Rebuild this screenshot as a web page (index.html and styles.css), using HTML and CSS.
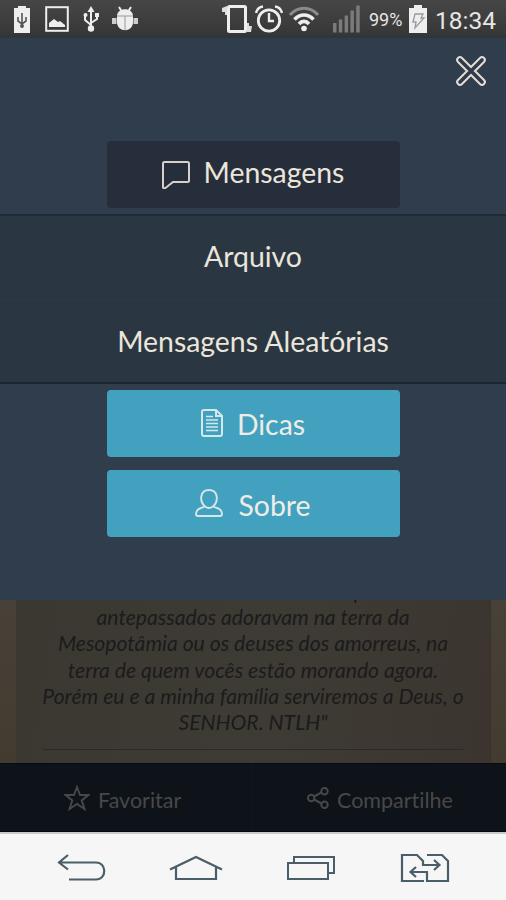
FILE: index.html
```
<!doctype html>
<html lang="pt-BR">
<head>
	<meta charset="UTF-8">
	<title>Mensagens</title>
	<link rel="stylesheet" href="styles.css">
</head>
<body>
<div class="screen">
	<div class="status">
		<div class="status-left">
			<svg width="18" height="28" viewBox="0 0 18 28"><path d="M5 1h8v2h4v25H1V3h4z" fill="#eee"/><path d="M9 8v14M5 12v4l4 3 4-3v-4" fill="none" stroke="#555" stroke-width="1.6"/><circle cx="9" cy="21" r="2" fill="#555"/></svg>
			<svg width="24" height="26" viewBox="0 0 24 26"><rect x="1.2" y="1.2" width="21.6" height="23.6" fill="none" stroke="#eee" stroke-width="2"/><path d="M4 21v-4l5-4 4 3 2-1 5 4v2z" fill="#eee"/></svg>
			<svg width="16" height="26" viewBox="0 0 16 26"><path d="M8 4v18M2 9v5l6 5M14 9v4l-6 4" fill="none" stroke="#eee" stroke-width="2"/><path d="M8 0l3.5 6h-7z" fill="#eee"/><circle cx="8" cy="22.500" r="3.200" fill="#eee"/><circle cx="2.500" cy="9" r="2" fill="#eee"/><path d="M12 7h4v4h-4z" fill="#eee"/></svg>
			<svg width="26" height="26" viewBox="0 0 26 26"><path d="M7 1l2.500 4M19 1l-2.500 4" stroke="#eee" stroke-width="2"/><path d="M5 10c0-9 16-9 16 0v6c0 11-16 11-16 0z" fill="#eee"/><path d="M0 12h4.500v6H0zM21.500 12H26v6h-4.500z" fill="#ccc"/><path d="M13 10v14M5 10h16" stroke="#999" stroke-width="1"/></svg>
		</div>
		<div class="status-right">
			<svg width="30" height="28" viewBox="0 0 30 28"><rect x="6.500" y="1.500" width="17" height="25" rx="1" fill="none" stroke="#eee" stroke-width="3"/><path d="M0 3l5-2v9H3V7H0zM25 18h2v3h3l-1 6h-4z" fill="#ddd"/></svg>
			<svg class="alarm" width="28" height="28" viewBox="0 0 28 28"><circle cx="14" cy="15.500" r="10.700" fill="none" stroke="#eee" stroke-width="2.800"/><path d="M14 8v8h5" fill="none" stroke="#eee" stroke-width="2.400"/><path d="M1 8c1-4 3-6 7-6.500M27 8c-1-4-3-6-7-6.500" fill="none" stroke="#eee" stroke-width="2.400"/></svg>
			<svg class="wifi" width="30" height="26" viewBox="0 0 30 26"><path d="M1 9c8-9 20-9 28 0" fill="none" stroke="#8a8a8a" stroke-width="3"/><path d="M5.500 13.500c5.500-6 13.500-6 19 0M10 18c3-3.500 7-3.500 10 0" fill="none" stroke="#eee" stroke-width="3.600"/><circle cx="15" cy="22.500" r="2.800" fill="#eee"/></svg>
			<svg class="signal" width="27" height="28" viewBox="0 0 27 28"><path d="M0 18h3.500v9.500H0zM5.800 14.500h3.500v13H5.800zM11.600 10.500h3.500v17h-3.500zM17.400 5.500h3.500v22h-3.500zM23.200 0.500h3.500v27h-3.500z" fill="#7b7b7b"/></svg>
			<span class="percent">99%</span>
			<svg class="battery" width="20" height="28" viewBox="0 0 20 28"><path d="M6 0h8v3h5v25H1V3h5z" fill="#eee"/><path d="M7 9h8l-2 4h3l-9 10 1-6H5z" fill="none" stroke="#999" stroke-width="1.300"/></svg>
			<span class="clock">18:34</span>
		</div>
	</div>

	<nav class="menu">
		<div class="menu-top">
			<svg width="32" height="32" viewBox="0 0 32 32"><path d="M5 5l22 22M27 5L5 27" stroke="#e4ddd5" stroke-width="7.600" stroke-linecap="round"/><path d="M5 5l22 22M27 5L5 27" stroke="#2d3b4b" stroke-width="3.600" stroke-linecap="round"/></svg>
		</div>
		<a class="button active">
			<svg width="28" height="28" viewBox="0 0 28 28"><path d="M2.500 1h23q1.500 0 1.500 1.500v17q0 1.500-1.500 1.500H11l-7.500 6q-2.500 1-2.500-1V2.500Q1 1 2.500 1z" fill="none" stroke="#d8d0c8" stroke-width="2"/></svg>
			<span>Mensagens</span>
		</a>
		<ul class="submenu">
			<li>Arquivo</li>
			<li>Mensagens Aleatórias</li>
		</ul>
		<a class="button tips">
			<svg width="22" height="28" viewBox="0 0 22 28"><path d="M3 1h12l6 6v18q0 2-2 2H3q-2 0-2-2V3q0-2 2-2zM15 1v6h6" fill="none" stroke="#d5e7e8" stroke-width="2"/><path d="M5 7.500h7M5 11h12M5 14.500h12M5 18h12M5 21.500h12" stroke="#d5e7e8" stroke-width="1.700"/></svg>
			<span>Dicas</span>
		</a>
		<a class="button about">
			<svg width="28" height="28" viewBox="0 0 28 28"><path d="M10 17.500C4 12 5 1 14 1s10 11 4 16.500c4 2 9 2 9 7.500q0 2-2 2H3q-2 0-2-2c0-5.500 5-5.500 9-7.500q4 3 8 0" fill="none" stroke="#d5e7e8" stroke-width="1.900" stroke-linejoin="round"/></svg>
			<span>Sobre</span>
		</a>
	</nav>

	<main class="page">
		<div class="card">
			<p class="verse">Resolvam se vão servir os deuses que os seus<br>
			antepassados adoravam na terra da<br>
			Mesopotâmia ou os deuses dos amorreus, na<br>
			terra de quem vocês estão morando agora.<br>
			Porém eu e a minha família serviremos a Deus, o<br>
			SENHOR. NTLH"</p>
			<hr>
		</div>
	</main>

	<div class="actions">
		<a class="favorite">
			<svg width="26" height="26" viewBox="0 0 26 26"><path d="M13 2l3 8h8.500l-6.800 5.400L20.500 24 13 19l-7.500 5 2.800-8.600L1.500 10H10z" fill="none" stroke="#484848" stroke-width="1.900"/></svg>
			<span>Favoritar</span>
		</a>
		<a class="share">
			<svg width="22" height="22" viewBox="0 0 22 22"><path d="M7 9.500l7.500-4M7 12.500l7.500 4" stroke="#484848" stroke-width="2"/><g fill="none" stroke="#484848" stroke-width="2"><circle cx="4.200" cy="11" r="3.200"/><circle cx="17.500" cy="4.200" r="3.200"/><circle cx="17.500" cy="17.800" r="3.200"/></g></svg>
			<span>Compartilhe</span>
		</a>
	</div>

	<div class="keys">
		<svg width="50" height="28" viewBox="0 0 50 28"><path d="M11 1L2 8.500l9 7M2 8.500h37c11 0 11 17 0 17H12" fill="none" stroke="#4a5e69" stroke-width="2.200"/></svg>
		<svg class="home" width="54" height="26" viewBox="0 0 54 26"><path d="M1 14.500L27 2l26 12.500M7 12v12h40V12" fill="none" stroke="#4a5e69" stroke-width="2.200"/></svg>
		<svg class="recent" width="48" height="24" viewBox="0 0 48 24"><path d="M1 7h40v16H1zM7 7V1h40v16h-6" fill="none" stroke="#4a5e69" stroke-width="2"/></svg>
		<svg class="switch" width="50" height="30" viewBox="0 0 50 30"><path d="M24 28H2V2h15l6 6v4h16M34 7l5.500 5-5.500 5M27 2h15l6 6v20H27V19H11M16 14l-5.500 5 5.500 5" fill="none" stroke="#4a5e69" stroke-width="2.200"/></svg>
	</div>
</div>
</body>
</html>
```
FILE: styles.css
```
*{
	margin:0;
	padding:0;
	box-sizing:border-box;
}

body{
	background:#000;
	overflow:hidden;
	font-family:Lato, sans-serif;
	font-variant-ligatures:none;
}

svg{
	display:block;
	flex-shrink:0;
}

.screen{
	width:506px;
	height:900px;
	display:flex;
	flex-direction:column;
	overflow:hidden;
}

/* status bar */
.status{
	height:38px;
	flex-shrink:0;
	display:flex;
	justify-content:space-between;
	padding:4px 10px 0 13px;
	background:linear-gradient(#464646, #393939 80%, #303438);
	color:#e6e6e6;
	font-family:Roboto, sans-serif;
}
.status-left{
	display:flex;
	align-items:center;
	height:29px;
	gap:14px;
}
.status-left svg:nth-child(4){
	margin-left:-1px;
}
.status-right{
	display:flex;
	align-items:center;
	height:29px;
}
.alarm{
	margin-left:3px;
}
.wifi{
	margin-left:6px;
}
.signal{
	margin-left:14px;
}
.percent{
	width:34px;
	margin-left:9px;
	padding-top:2px;
	font-size:18px;
	white-space:nowrap;
}
.battery{
	margin-left:5px;
}
.clock{
	width:61px;
	margin-left:7px;
	padding-top:3px;
	font-size:24.5px;
	white-space:nowrap;
}

/* menu */
.menu{
	height:562px;
	flex-shrink:0;
	background:#303d4c;
}
.menu-top{
	height:103px;
	display:flex;
	justify-content:flex-end;
	padding:17px 19px 0 0;
}
.button{
	display:flex;
	align-items:center;
	justify-content:center;
	width:293px;
	height:67px;
	margin:0 auto;
	border-radius:4px;
	background:#43a1c0;
	color:#eeede5;
	font-size:28.4px;
}
.active{
	background:#252e3a;
	color:#ebe5da;
	padding-bottom:6px;
}
.active svg{
	margin:7px 14px 0 0;
}
.submenu{
	list-style:none;
	height:170px;
	margin-top:6px;
	border-top:2px solid #1f2b36;
	border-bottom:2px solid #1b2730;
	background:#2a3743;
	color:#ebe5da;
	font-size:28.4px;
	text-align:center;
}
.submenu li{
	height:83px;
	line-height:80px;
}
.submenu li + li{
	border-top:1px solid #2d3946;
	line-height:82px;
}
.tips{
	margin-top:6px;
}
.tips svg{
	margin:0 14px 2px 0;
}
.about{
	margin-top:13px;
	padding-top:3px;
}
.about svg{
	margin:0 15px 4px 0;
}

/* dimmed page behind the menu */
.page{
	height:163px;
	flex-shrink:0;
	padding:0 15px 0 16px;
	background:linear-gradient(#484138, #443b30);
	overflow:hidden;
}
.card{
	height:163px;
	padding:0 27px;
	background:linear-gradient(100deg, #3b3832, #3e3b35 50%, #3c352f);
	border-right:1px solid #383329;
}
.verse{
	margin:0 -10px;
	color:#1b1b1b;
	font-size:21.15px;
	font-style:italic;
	line-height:26.2px;
	text-align:center;
	white-space:nowrap;
	transform:translateY(-22px);
}
.card hr{
	border:0;
	border-top:1px solid #2c2a26;
	margin-top:-8px;
}

.actions{
	height:69px;
	flex-shrink:0;
	display:flex;
	background:#0e131a;
	border-top:1px solid #070b11;
	border-bottom:1px solid #05080c;
	color:#484848;
	font-size:21.5px;
}
.actions a{
	width:253px;
	display:flex;
	align-items:center;
	padding-top:5px;
}
.actions .favorite{
	padding-left:64px;
	border-right:1px solid #111720;
}
.favorite svg{
	margin:0 8px 4px 0;
}
.actions .share{
	padding-left:54px;
}
.share svg{
	margin:0 8px 4px 0;
}

.keys{
	height:68px;
	flex-shrink:0;
	display:flex;
	align-items:center;
	padding:2px 0 0 57px;
	border-top:2px solid #c8cacc;
	background:#f6f6f6;
}
.home{
	margin-left:62px;
}
.recent{
	margin-left:64px;
}
.switch{
	margin-left:65px;
}
```
